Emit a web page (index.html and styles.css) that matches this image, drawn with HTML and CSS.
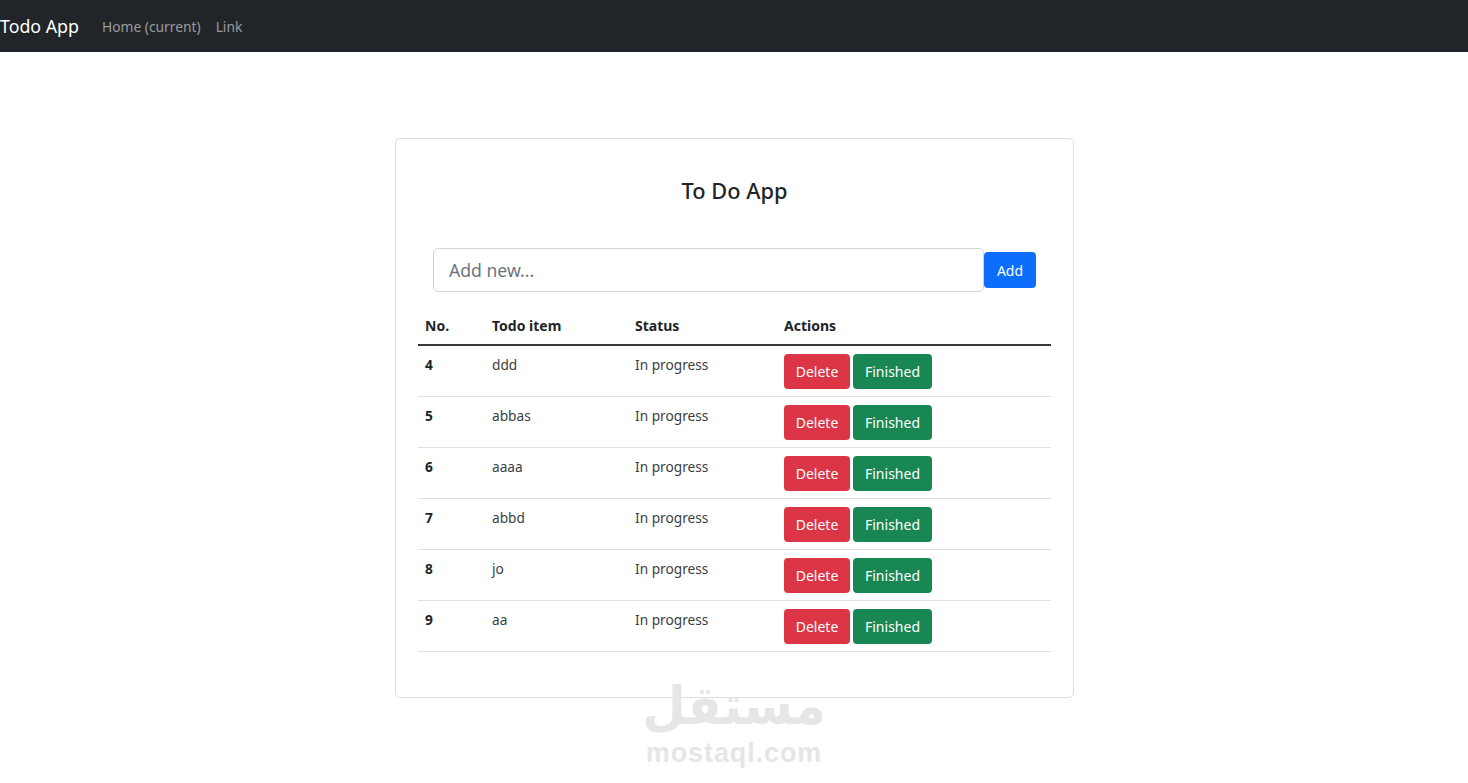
FILE: index.html
```html
<!DOCTYPE html>
<html lang="en">
<head>
  <meta charset="UTF-8" />
  <title>Todo App</title>
  <link rel="stylesheet" href="styles.css">
</head>
<body>
  <nav class="navbar">
    <a class="brand" href="#">Todo App</a>
    <a class="nav-link" href="#">Home (current)</a>
    <a class="nav-link" href="#">Link</a>
  </nav>

  <main class="page">
    <section class="card">
      <h1 class="card-title">To Do App</h1>
      <form class="add-form">
        <input class="add-input" type="text" placeholder="Add new...">
        <button class="btn btn-blue" type="button">Add</button>
      </form>
      <table class="todo-table">
        <thead>
          <tr>
            <th class="col-no">No.</th>
            <th class="col-item">Todo item</th>
            <th class="col-status">Status</th>
            <th>Actions</th>
          </tr>
        </thead>
        <tbody>
          <tr>
            <th>4</th><td>ddd</td><td>In progress</td>
            <td><div class="actions"><button class="btn btn-red">Delete</button><button class="btn btn-green">Finished</button></div></td>
          </tr>
          <tr>
            <th>5</th><td>abbas</td><td>In progress</td>
            <td><div class="actions"><button class="btn btn-red">Delete</button><button class="btn btn-green">Finished</button></div></td>
          </tr>
          <tr>
            <th>6</th><td>aaaa</td><td>In progress</td>
            <td><div class="actions"><button class="btn btn-red">Delete</button><button class="btn btn-green">Finished</button></div></td>
          </tr>
          <tr>
            <th>7</th><td>abbd</td><td>In progress</td>
            <td><div class="actions"><button class="btn btn-red">Delete</button><button class="btn btn-green">Finished</button></div></td>
          </tr>
          <tr>
            <th>8</th><td>jo</td><td>In progress</td>
            <td><div class="actions"><button class="btn btn-red">Delete</button><button class="btn btn-green">Finished</button></div></td>
          </tr>
          <tr>
            <th>9</th><td>aa</td><td>In progress</td>
            <td><div class="actions"><button class="btn btn-red">Delete</button><button class="btn btn-green">Finished</button></div></td>
          </tr>
        </tbody>
      </table>
    </section>
  </main>

  <!-- marca d'agua por cima do cartao -->
  <div class="watermark">
    <div class="wm-arabic" lang="ar" dir="rtl">مستقل</div>
    <div class="wm-latin">mostaql.com</div>
  </div>
</body>
</html>
```

FILE: styles.css
```css
* {
  box-sizing: border-box;
}
body {
  margin: 0;
  background-color: #fff;
  color: #212529;
  font-family: "Noto Sans", "Open Sans", sans-serif;
  font-size: 13.7px;
  overflow: hidden;
}
.navbar {
  display: flex;
  align-items: center;
  height: 52px;
  background-color: #212529;
}
.brand {
  margin-right: 23px;
  color: #fff;
  font-size: 17.8px;
  text-decoration: none;
}
.nav-link {
  margin-right: 15px;
  color: rgba(255, 255, 255, 0.55);
  font-size: 13.8px;
  text-decoration: none;
}
.page {
  display: flex;
  justify-content: center;
  padding-top: 86px;
  padding-left: 1px;
}
.card {
  width: 679px;
  height: 560px;
  padding: 37px 22px 0;
  border: 1px solid rgba(0, 0, 0, 0.125);
  border-radius: 5px;
}
.card-title {
  margin: 0 0 42px;
  font-size: 21.8px;
  font-weight: 500;
  line-height: 30px;
  text-align: center;
}
.add-form {
  display: flex;
  align-items: center;
  margin: 0 15px 16px;
}
.add-input {
  flex: 1;
  height: 44px;
  padding: 0 15px;
  border: 1px solid #ced4da;
  border-radius: 5px;
  color: #212529;
  font-family: inherit;
  font-size: 17.6px;
  min-width: 0;
}
.add-input::placeholder {
  color: #6c757d;
  opacity: 1;
}
.btn {
  height: 35px;
  padding: 0;
  border: 0;
  border-radius: 4px;
  color: #fff;
  font-family: inherit;
  font-size: 14px;
}
.btn-blue {
  width: 52px;
  height: 36px;
  background-color: #0d6efd;
}
.btn-red {
  width: 66px;
  background-color: #dc3545;
}
.btn-green {
  width: 79px;
  background-color: #198754;
}
.todo-table {
  width: 100%;
  border-collapse: collapse;
  table-layout: fixed;
}
.todo-table th,
.todo-table td {
  padding: 8px 7px 7px;
  line-height: 21px;
  text-align: left;
  vertical-align: top;
  border-bottom: 1px solid #dee2e6;
}
.todo-table thead th {
  height: 37px;
  padding-top: 7px;
  font-size: 14px;
  border-bottom: 2px solid #33383c;
}
.todo-table tbody tr {
  height: 51px;
}
.todo-table td {
  color: #3a3f44;
}
.col-no {
  width: 67px;
}
.col-item {
  width: 143px;
}
.col-status {
  width: 149px;
}
.actions {
  display: flex;
  gap: 3px;
}
.watermark {
  position: absolute;
  left: 614px;
  top: 683px;
  width: 240px;
  text-align: center;
  color: #e6e6e6;
  font-weight: 700;
  pointer-events: none;
}
.wm-arabic {
  height: 46px;
  font-family: "DejaVu Sans", sans-serif;
  font-size: 44px;
  line-height: 46px;
  transform: scale(1.14, 1.2);
}
.wm-latin {
  margin-top: 11px;
  font-family: "Liberation Sans", sans-serif;
  font-size: 27px;
  letter-spacing: 0.9px;
  line-height: 26px;
}
```
